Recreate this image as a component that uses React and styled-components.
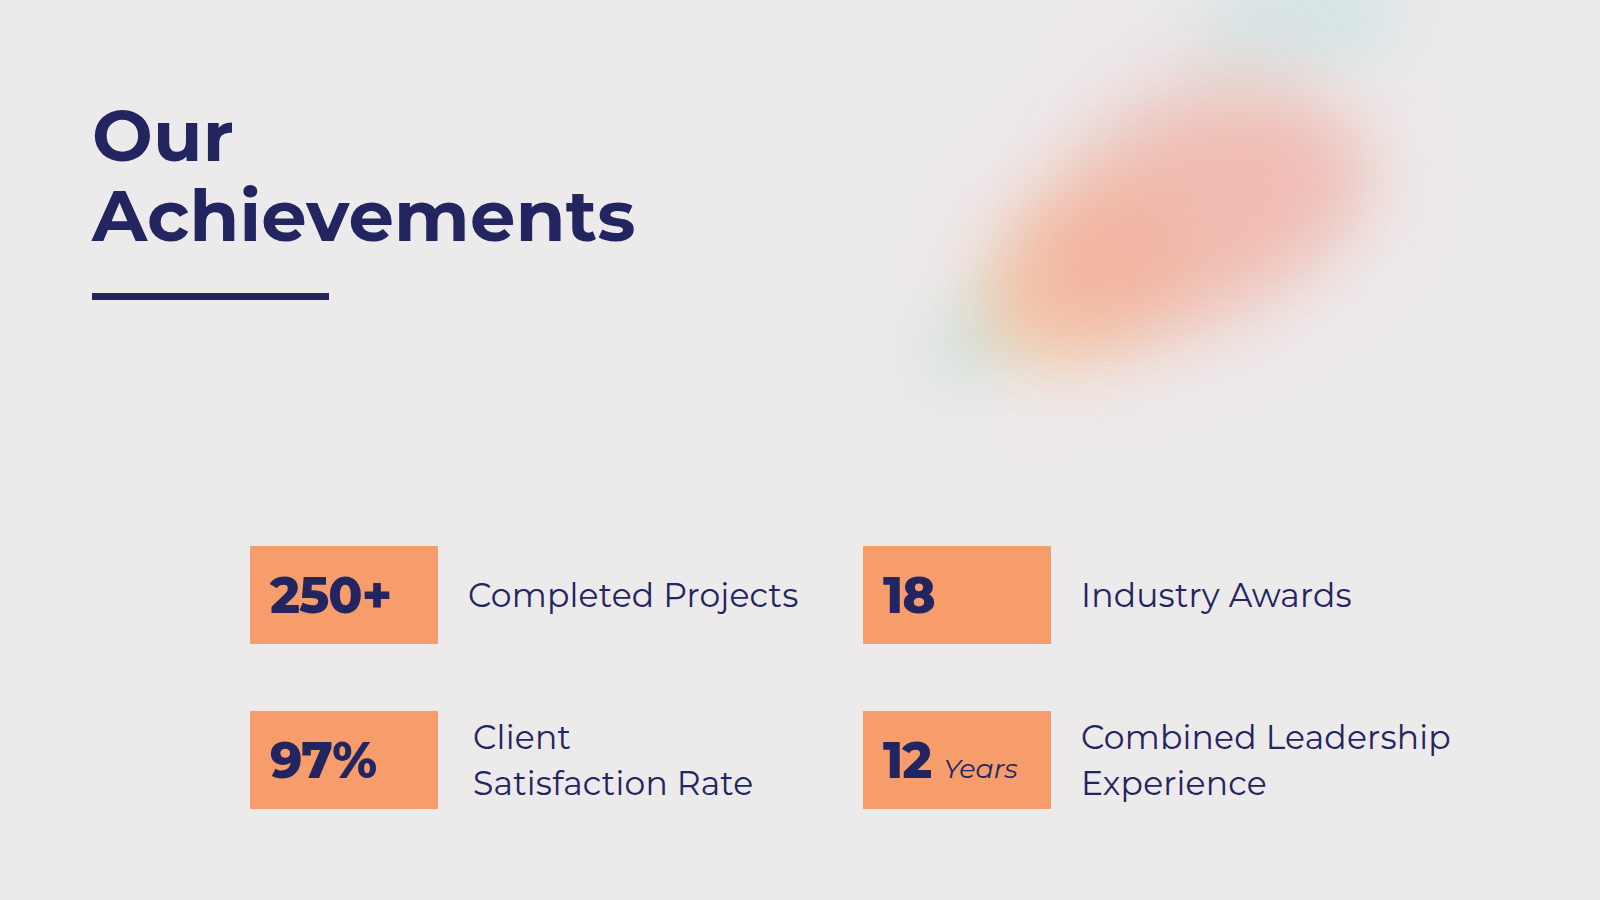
import React from 'react';
import styled, { createGlobalStyle } from 'styled-components';

const GlobalStyle = createGlobalStyle`
  html, body {
    margin: 0;
    padding: 0;
    background: #edeaeb;
  }
  * {
    box-sizing: border-box;
  }
`;

const navy = '#232560';
const orange = '#f79c6b';

const Page = styled.div`
  position: relative;
  width: 1600px;
  height: 900px;
  overflow: hidden;
  background: #edeaeb;
  font-family: "Montserrat", Inter, "Open Sans", sans-serif;
  color: ${navy};
`;

const Haze = styled.div`
  position: absolute;
  inset: 0;
  pointer-events: none;
`;

const Glow = styled.div`
  position: absolute;
  left: ${(p) => p.$x - p.$w / 2}px;
  top: ${(p) => p.$y - p.$h / 2}px;
  width: ${(p) => p.$w}px;
  height: ${(p) => p.$h}px;
  border-radius: 50%;
  background: ${(p) => p.$color};
  transform: rotate(${(p) => p.$rot}deg);
  filter: blur(${(p) => p.$blur}px);
`;

const Content = styled.div`
  position: relative;
  display: flex;
  flex-direction: column;
  padding-top: 95px;
`;

const Header = styled.header`
  padding-left: 92px;
`;

const Title = styled.h1`
  margin: 0;
  font-size: 72px;
  line-height: 80px;
  font-weight: 700;
  letter-spacing: 0.2px;
`;

const Rule = styled.div`
  margin-top: 38px;
  width: 237px;
  height: 7px;
  background: ${navy};
`;

const Stats = styled.section`
  margin: 246px 0 0 250px;
  display: grid;
  grid-template-columns: 613px 1fr;
  grid-auto-rows: 98px;
  row-gap: 67px;
`;

const Stat = styled.div`
  display: flex;
  align-items: center;
`;

const Badge = styled.div`
  flex: 0 0 188px;
  height: 98px;
  background: ${orange};
  display: flex;
  align-items: baseline;
  padding: 25px 0 0 20px;
  gap: 12px;
`;

const Value = styled.span`
  font-size: 50px;
  line-height: 50px;
  font-weight: 800;
  letter-spacing: -1px;
`;

const Unit = styled.span`
  font-size: 27px;
  font-style: italic;
  font-weight: 400;
`;

const Label = styled.p`
  margin: 0 0 0 ${(p) => 30 + (p.$inset || 0)}px;
  font-size: 33px;
  line-height: 46px;
  font-weight: 400;
  letter-spacing: 0.2px;
`;

const glows = [
  { x: 1300, y: 22, w: 230, h: 80, rot: -10, color: 'rgba(200, 226, 226, 0.85)', blur: 36 },
  { x: 1190, y: 120, w: 220, h: 110, rot: -25, color: 'rgba(232, 206, 206, 0.55)', blur: 45 },
  { x: 985, y: 330, w: 150, h: 80, rot: -40, color: 'rgba(200, 224, 220, 0.75)', blur: 30 },
  { x: 1080, y: 280, w: 210, h: 140, rot: -35, color: 'rgba(244, 206, 165, 0.95)', blur: 36 },
  { x: 1185, y: 220, w: 370, h: 200, rot: -24, color: 'rgba(241, 174, 157, 0.82)', blur: 42 },
  { x: 1270, y: 190, w: 200, h: 100, rot: -10, color: 'rgba(240, 192, 190, 0.5)', blur: 35 },
];

const stats = [
  { value: '250+', label: ['Completed Projects'] },
  { value: '18', label: ['Industry Awards'] },
  { value: '97%', label: ['Client', 'Satisfaction Rate'], inset: 5 },
  { value: '12', unit: 'Years', label: ['Combined Leadership', 'Experience'] },
];

const App = () => (
  <Page>
    <GlobalStyle />
    <Haze aria-hidden="true">
      {glows.map((g) => (
        <Glow
          key={`${g.x}-${g.y}`}
          $x={g.x}
          $y={g.y}
          $w={g.w}
          $h={g.h}
          $rot={g.rot}
          $color={g.color}
          $blur={g.blur}
        />
      ))}
    </Haze>
    <Content>
      <Header>
        <Title>
          Our
          <br />
          Achievements
        </Title>
        <Rule />
      </Header>
      <Stats>
        {stats.map((s) => (
          <Stat key={s.value}>
            <Badge>
              <Value>{s.value}</Value>
              {s.unit ? <Unit>{s.unit}</Unit> : null}
            </Badge>
            <Label $inset={s.inset}>
              {s.label.map((line, i) => (
                <React.Fragment key={line}>
                  {i > 0 ? <br /> : null}
                  {line}
                </React.Fragment>
              ))}
            </Label>
          </Stat>
        ))}
      </Stats>
    </Content>
  </Page>
);

export default App;
